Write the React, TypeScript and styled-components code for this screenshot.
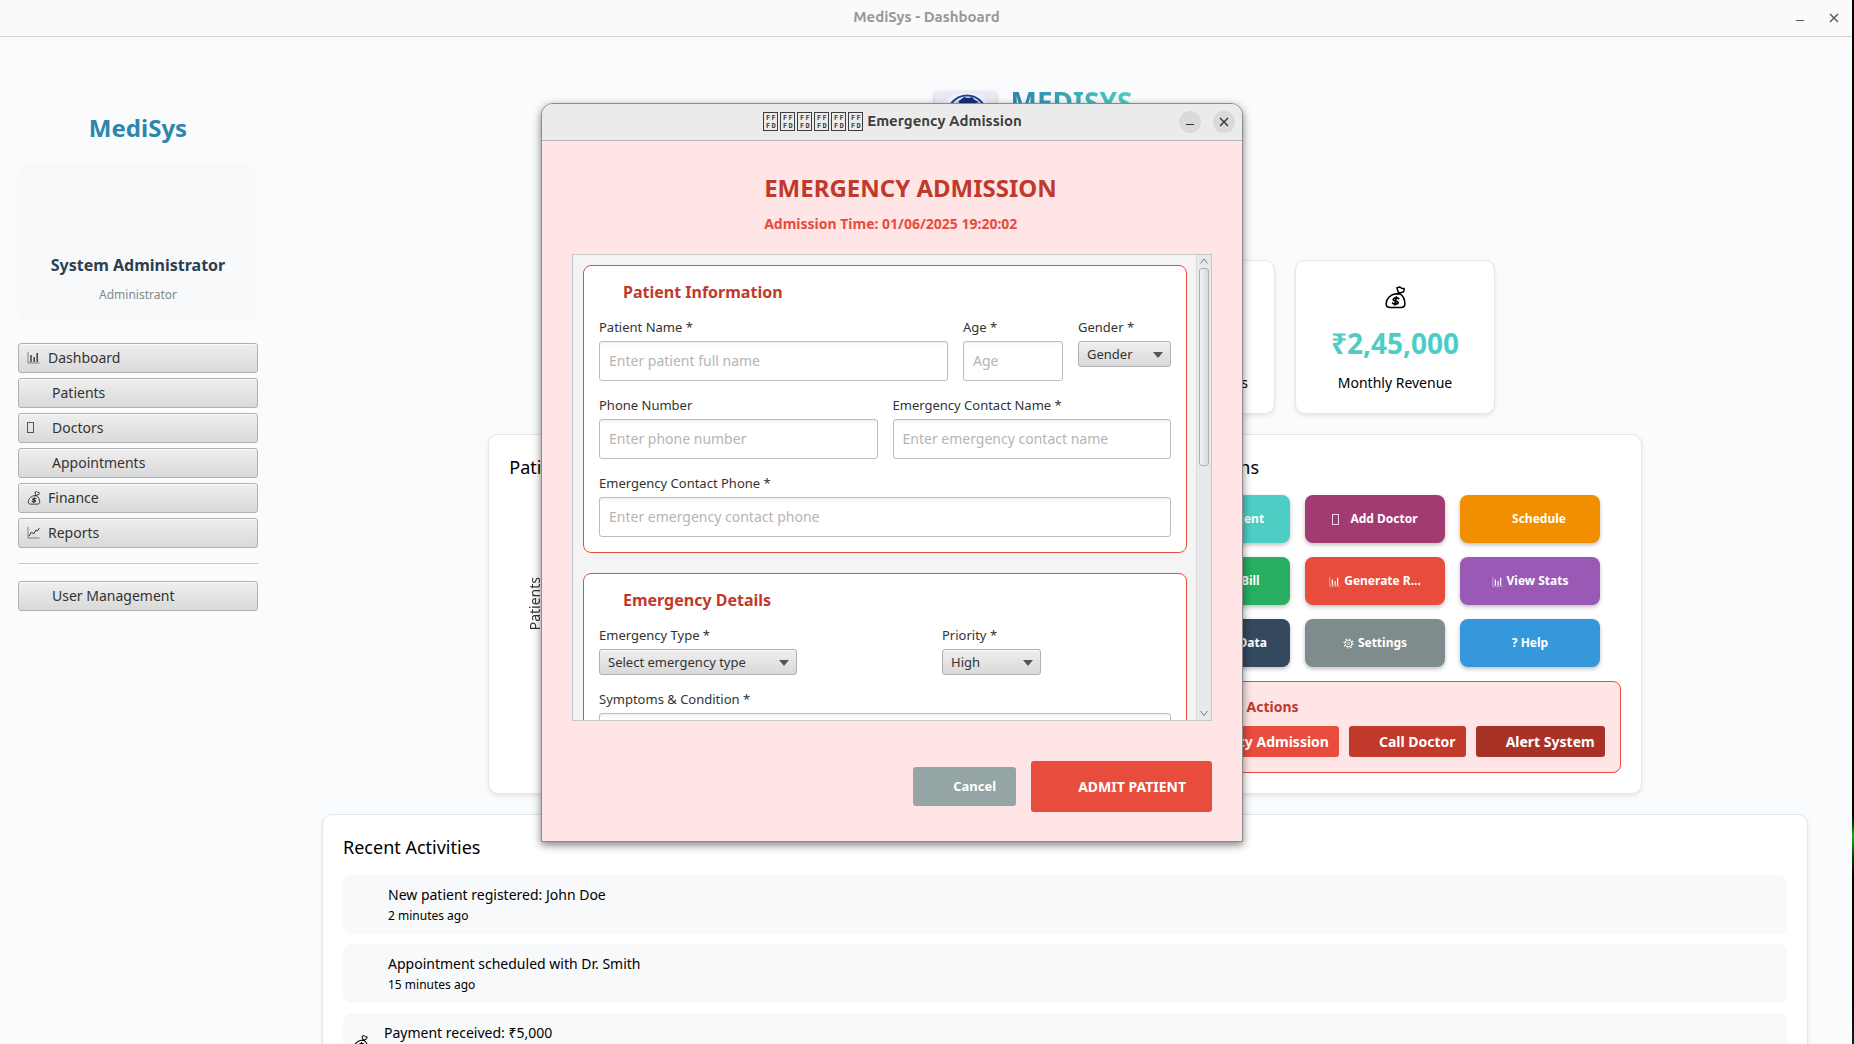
import React from "react";
import styled, { createGlobalStyle } from "styled-components";

const GlobalStyle = createGlobalStyle`
  * { box-sizing: border-box; }
  html, body { margin: 0; height: 100%; background: #000; overflow: hidden; }
  body, button, input, select, textarea { font-family: "Noto Sans", "Open Sans", sans-serif; }
  button, select { cursor: pointer; }
  h1, h2, h3, p { margin: 0; }
`;

/* ---------- desktop and windows ---------- */

const Desktop = styled.div`
  position: relative;
  height: 100vh;
  padding-right: 2px;
  overflow: hidden;
  background: linear-gradient(#000 0 78%, #0c3a0a 79%, #12b812 80%, #0c3a0a 82%, #000 84% 95%, #022 100%);
`;

const MainWindow = styled.div`
  height: 100%;
  display: flex;
  flex-direction: column;
  background: #fafbfd;
  overflow: hidden;
`;

const TitleBar = styled.header<{ $active?: boolean }>`
  flex: none;
  display: grid;
  grid-template-columns: 1fr auto 1fr;
  align-items: center;
  height: 37px;
  padding-right: 7px;
  background: ${(p) => (p.$active ? "#ebebeb" : "#fafafa")};
  border-bottom: 1px solid ${(p) => (p.$active ? "#b9b9b9" : "#d3d3d3")};
  color: ${(p) => (p.$active ? "#3d3d3d" : "#979797")};
`;

const WindowTitle = styled.div`
  grid-column: 2;
  display: flex;
  align-items: center;
  gap: 4px;
  padding: 0 0 2px 8px;
  font-family: Ubuntu, "Noto Sans", sans-serif;
  font-size: 15px;
  line-height: 20px;
  font-weight: 600;
`;

const MissingGlyphs = styled.span`
  display: flex;
  gap: 2px;
`;

const MissingGlyph = styled.span`
  display: grid;
  grid-template-columns: 1fr 1fr;
  place-items: center;
  width: 15px;
  height: 19px;
  padding: 1px;
  border: 1px solid #3d3d3d;
  font: 700 7px/8px "DejaVu Sans Mono", monospace;
`;

const WindowControls = styled.div`
  display: flex;
  justify-content: flex-end;
  gap: 12px;
`;

const WindowButton = styled.button<{ $filled?: boolean }>`
  width: 22px;
  height: 22px;
  padding: 0;
  border: 0;
  border-radius: 50%;
  background: ${(p) => (p.$filled ? "#dadada" : "transparent")};
  color: ${(p) => (p.$filled ? "#333" : "#555")};
  svg { display: block; }
`;

function Controls({ filled }: { filled?: boolean }) {
  return (
    <WindowControls>
      <WindowButton $filled={filled} aria-label="Minimize">
        <svg width="22" height="22" viewBox="0 0 22 22"><path d="M7 13.5h8" stroke="currentColor" /></svg>
      </WindowButton>
      <WindowButton $filled={filled} aria-label="Close">
        <svg width="22" height="22" viewBox="0 0 22 22"><path d="M7 7l8 8M15 7l-8 8" stroke="currentColor" strokeWidth="1.4" /></svg>
      </WindowButton>
    </WindowControls>
  );
}

/* ---------- icons ---------- */

const Blank = styled.span<{ $w: number }>`
  flex: none;
  display: inline-block;
  width: ${(p) => p.$w}px;
`;

const BarsIcon = ({ size = 13 }: { size?: number }) => (
  <svg width={size} height={size} viewBox="0 0 13 13" fill="none" stroke="currentColor">
    <path d="M1 1v11h11.5" strokeWidth=".8" opacity=".7" />
    <path d="M4 4v7M7.2 6v5M10.2 2v9" strokeWidth="1.4" />
  </svg>
);

const TrendIcon = () => (
  <svg width="13" height="13" viewBox="0 0 13 13" fill="none" stroke="currentColor">
    <path d="M1 1v11h11.5" strokeWidth=".8" opacity=".7" />
    <path d="M2 10l2.5-4 2 2L9 4l1.4 1L12.5 2" strokeWidth="1" />
  </svg>
);

const BagIcon = ({ size }: { size: number }) => (
  <svg width={size} height={size} viewBox="0 0 24 24" fill="none" stroke="currentColor" strokeLinecap="round" strokeLinejoin="round">
    <path d="M12.5 8C7 8.500 2.200 13.500 2.200 18.500c0 3 1.500 4 4.500 4h10.800c3 0 4.300-1.200 4.300-4 0-4.500-2.200-8.300-5.300-10.500z" strokeWidth="1.600" />
    <path d="M12.500 8l4.500.5M14.800 6.500L13.500 1.800l3.200-.8 1.600 1.400 2.800.3-.6 3.300-3.800 1.200z" strokeWidth="1.500" />
    <path d="M15.300 13.200c-1.200-1.100-5.300-1.100-5.600.9-.3 2 5.400 1.200 5 3.400-.4 1.900-4.500 1.600-5.700.4M12.900 11.500l-1.600 8.200" strokeWidth="1.900" />
  </svg>
);

const GearIcon = () => (
  <svg width="11" height="11" viewBox="0 0 11 11" fill="none" stroke="currentColor">
    <circle cx="5.500" cy="5.500" r="3.400" />
    <circle cx="5.500" cy="5.500" r="1" strokeWidth=".8" />
    <circle cx="5.500" cy="5.500" r="4.500" strokeWidth="1.200" strokeDasharray="1.500 2.034" />
  </svg>
);

const Tofu = styled.span<{ $after: number }>`
  width: 7px;
  height: 11px;
  margin-right: ${(p) => p.$after}px;
  border: 1px solid currentColor;
  opacity: 0.8;
`;

/* ---------- sidebar ---------- */

const Body = styled.div`
  flex: 1;
  min-height: 0;
  display: flex;
`;

const Sidebar = styled.aside`
  flex: none;
  width: 278px;
  padding: 74px 20px 0 18px;
`;

const Brand = styled.h1`
  font-size: 24px;
  line-height: 33px;
  text-align: center;
  color: #2e86ab;
`;

const UserCard = styled.section`
  margin: 20px 0 21px;
  padding: 90px 20px 18px;
  border-radius: 12px;
  background: #f8f9fa;
  text-align: center;
`;

const UserName = styled.p`
  font-size: 16px;
  line-height: 22px;
  font-weight: 700;
  color: #2c3e50;
  white-space: nowrap;
`;

const UserRole = styled.p`
  margin-top: 10px;
  font-size: 12px;
  line-height: 18px;
  color: #7f8c8d;
`;

const Menu = styled.nav`
  display: flex;
  flex-direction: column;
  gap: 5px;
`;

const raised = `
  border: 1px solid #b0b0b0;
  border-radius: 3px;
  background: linear-gradient(#efefef, #d9d9d9);
  box-shadow: inset 0 1px 0 #fafafa;
  color: #333;
`;

const MenuButton = styled.button`
  ${raised}
  display: flex;
  align-items: center;
  height: 30px;
  padding: 0 8px 1px;
  font-size: 14px;
  line-height: 19px;
  text-align: left;
`;

const IconSlot = styled.span<{ $w: number }>`
  flex: none;
  display: flex;
  align-items: center;
  width: ${(p) => p.$w}px;
`;

const Separator = styled.hr`
  width: 100%;
  height: 1px;
  margin: 10px 0 12px;
  border: 0;
  background: #c8c8c8;
`;

/* ---------- dashboard ---------- */

const Main = styled.main`
  flex: 1;
  min-width: 0;
  padding: 55px 44px 0;
  display: flex;
  flex-direction: column;
  align-items: center;
  color: #000;
  > * { flex-shrink: 0; }
`;

const Header = styled.div`
  display: flex;
  align-items: flex-start;
  gap: 15px;
  height: 168px;
`;

const Logo = styled.svg`
  filter: drop-shadow(0 1px 2px rgba(0, 0, 0, 0.25));
`;

const HeaderText = styled.div`
  width: 185px;
`;

const HeaderTitle = styled.h1`
  width: 120px;
  font-size: 28px;
  line-height: 20px;
  background: linear-gradient(90deg, #2e86ab, #4ecdc4);
  -webkit-background-clip: text;
  background-clip: text;
  color: transparent;
`;

const Stats = styled.div`
  display: flex;
  gap: 20px;
`;

const Card = styled.section`
  border: 1px solid #e1e8ed;
  border-radius: 10px;
  background: #fff;
  box-shadow: 0 2px 4px rgba(0, 0, 0, 0.09);
`;

const StatCard = styled(Card)`
  width: 200px;
  padding: 20px;
  display: flex;
  flex-direction: column;
  align-items: center;
  gap: 10px;
`;

const StatIcon = styled.div`
  display: grid;
  place-items: center;
  height: 33px;
`;

const StatValue = styled.div`
  font-size: 28px;
  line-height: 38px;
  font-weight: 700;
  color: #4ecdc4;
`;

const StatLabel = styled.div`
  padding-top: 1px;
  font-size: 14px;
  line-height: 20px;
  white-space: nowrap;
`;

const Panels = styled.div`
  display: flex;
  gap: 20px;
  margin: 20px 0;
`;

const Panel = styled(Card)`
  padding: 20px;
`;

const ChartPanel = styled(Panel)`
  width: 600px;
  display: flex;
  flex-direction: column;
`;

const PanelTitle = styled.h2`
  margin-bottom: 15px;
  font-size: 18px;
  line-height: 25px;
  font-weight: 400;
`;

const AxisLabel = styled.div`
  align-self: flex-start;
  margin: 82px 0 0 16px;
  writing-mode: vertical-rl;
  rotate: 180deg;
  font-size: 14px;
  line-height: 19px;
  color: #333;
`;

const ActionGrid = styled.div`
  display: grid;
  grid-template-columns: repeat(3, 140px);
  justify-content: center;
  gap: 14px 15px;
`;

const ActionButton = styled.button<{ $color: string }>`
  display: flex;
  align-items: center;
  justify-content: center;
  gap: 4px;
  height: 48px;
  padding: 0 10px;
  border: 0;
  border-radius: 8px;
  background: ${(p) => p.$color};
  box-shadow: 0 2px 4px rgba(0, 0, 0, 0.25);
  color: #fff;
  font-size: 12px;
  line-height: 16px;
  font-weight: 700;
  white-space: nowrap;
`;

const AlertBox = styled.div`
  margin-top: 14px;
  padding: 15px;
  border: 1px solid #e74c3c;
  border-radius: 8px;
  background: #ffe5e5;
`;

const AlertTitle = styled.h3`
  display: flex;
  margin-bottom: 10px;
  font-size: 14px;
  line-height: 19px;
  color: #c0392b;
`;

const AlertRow = styled.div`
  display: flex;
  gap: 10px;
`;

const SolidButton = styled.button<{ $color: string; $size?: number; $pad?: string }>`
  display: flex;
  align-items: center;
  padding: ${(p) => p.$pad ?? "6px 10px"};
  border: 0;
  border-radius: 3px;
  background: ${(p) => p.$color};
  color: #fff;
  font-size: ${(p) => p.$size ?? 14}px;
  line-height: 19px;
  font-weight: 700;
  white-space: nowrap;
`;

const Recent = styled(Panel)`
  align-self: stretch;
`;

const ActivityList = styled.div`
  display: flex;
  flex-direction: column;
  gap: 10px;
`;

const Activity = styled.div`
  display: flex;
  align-items: center;
  gap: 15px;
  padding: 10px;
  border-radius: 8px;
  background: #f8f9fa;
`;

const ActivityText = styled.p`
  font-size: 14px;
  line-height: 19px;
`;

const ActivityTime = styled.p`
  margin-top: 3px;
  font-size: 12px;
  line-height: 17px;
`;

/* ---------- admission dialog ---------- */

const Dialog = styled.div`
  position: absolute;
  left: 541px;
  top: 103px;
  width: 702px;
  border: 1px solid #8b8b8b;
  border-radius: 12px 12px 0 0;
  box-shadow: 0 3px 9px rgba(0, 0, 0, 0.5);
  background: #ffe5e5;
  overflow: hidden;
`;

const DialogBody = styled.form`
  padding: 30px 30px 29px;
`;

const DialogHead = styled.div`
  display: flex;
  justify-content: center;
  gap: 15px;
  margin-bottom: 21px;
`;

const DialogTitle = styled.h2`
  font-size: 24px;
  line-height: 33px;
  color: #c0392b;
`;

const AdmissionTime = styled.p`
  margin-top: 10px;
  font-size: 14px;
  line-height: 19px;
  font-weight: 700;
  color: #e74c3c;
`;

const ScrollPane = styled.div`
  display: flex;
  height: 467px;
  border: 1px solid #c8c8c8;
  background: #f4f4f4;
`;

const ScrollContent = styled.div`
  flex: 1;
  min-width: 0;
  padding: 10px 9px 10px 10px;
  overflow: hidden;
`;

const ScrollTrack = styled.div`
  flex: none;
  display: flex;
  flex-direction: column;
  align-items: center;
  width: 15px;
  border-left: 1px solid #dcdcdc;
  background: #e9e9e9;
  color: #777;
`;

const Thumb = styled.div`
  width: 10px;
  height: 198px;
  margin-bottom: auto;
  border: 1px solid #b0b0b0;
  border-radius: 3px;
  background: linear-gradient(90deg, #f2f2f2, #dadada);
`;

const FormCard = styled.fieldset`
  display: flex;
  flex-direction: column;
  gap: 15px;
  min-width: 0;
  margin: 0 0 20px;
  padding: 15px;
  border: 1px solid #e74c3c;
  border-radius: 8px;
  background: #fff;
`;

const FormTitle = styled.h3`
  display: flex;
  font-size: 16px;
  line-height: 22px;
  color: #c0392b;
`;

const FieldRow = styled.div`
  display: flex;
  gap: 15px;
`;

const Field = styled.div<{ $flex?: string }>`
  flex: ${(p) => p.$flex ?? "1 1 0"};
  min-width: 0;
  display: flex;
  flex-direction: column;
  align-items: flex-start;
  gap: 5px;
`;

const Label = styled.label`
  font-size: 13px;
  line-height: 18px;
  color: #333;
  white-space: nowrap;
`;

const textBox = `
  width: 100%;
  border: 1px solid #bdbdbd;
  border-radius: 3px;
  background: linear-gradient(#f2f2f2, #fff 4px);
  font-size: 14px;
  outline: 0;
  &::placeholder { color: #b5b5b5; opacity: 1; }
`;

const TextInput = styled.input`
  ${textBox}
  height: 40px;
  padding: 0 9px 1px;
`;

const TextArea = styled.textarea`
  ${textBox}
  display: block;
  height: 80px;
  padding: 9px;
  resize: none;
`;

const SelectWrap = styled.div<{ $w: number }>`
  position: relative;
  width: ${(p) => p.$w}px;
  &::after {
    content: "";
    position: absolute;
    right: 8px;
    top: 11px;
    border: 5px solid transparent;
    border-top: 6px solid #555;
    border-bottom: 0;
    pointer-events: none;
  }
`;

const Select = styled.select`
  ${raised}
  appearance: none;
  display: block;
  width: 100%;
  height: 26px;
  padding: 0 20px 0 8px;
  font-size: 13px;
  line-height: 18px;
`;

const DialogActions = styled.div`
  display: flex;
  justify-content: flex-end;
  align-items: center;
  gap: 15px;
  margin-top: 40px;
`;

const menuItems: { label: string; icon: React.ReactNode; slot: number }[] = [
  { label: "Dashboard", icon: <BarsIcon />, slot: 21 },
  { label: "Patients", icon: null, slot: 25 },
  { label: "Doctors", icon: <Tofu $after={0} />, slot: 25 },
  { label: "Appointments", icon: null, slot: 25 },
  { label: "Finance", icon: <BagIcon size={14} />, slot: 21 },
  { label: "Reports", icon: <TrendIcon />, slot: 21 },
];

const actions: { label: string; color: string; icon: React.ReactNode }[] = [
  { label: "Add Patient", color: "#4ecdc4", icon: <Blank $w={14} /> },
  { label: "Add Doctor", color: "#a23b72", icon: <Tofu $after={7} /> },
  { label: "Schedule", color: "#f18f01", icon: <Blank $w={14} /> },
  { label: "Create Bill", color: "#27ae60", icon: <Blank $w={14} /> },
  { label: "Generate R...", color: "#e74c3c", icon: <BarsIcon size={11} /> },
  { label: "View Stats", color: "#9b59b6", icon: <BarsIcon size={11} /> },
  { label: "Backup Data", color: "#34495e", icon: <Blank $w={14} /> },
  { label: "Settings", color: "#7f8c8d", icon: <GearIcon /> },
  { label: "? Help", color: "#3498db", icon: null },
];

const activities = [
  { text: "New patient registered: John Doe", time: "2 minutes ago", icon: <Blank $w={20} /> },
  { text: "Appointment scheduled with Dr. Smith", time: "15 minutes ago", icon: <Blank $w={20} /> },
  { text: "Payment received: ₹5,000", time: "1 hour ago", icon: <BagIcon size={16} /> },
];

function SelectField({ id, label, value, width, flex }: { id: string; label: string; value: string; width: number; flex: string }) {
  return (
    <Field $flex={flex}>
      <Label htmlFor={id}>{label}</Label>
      <SelectWrap $w={width}>
        <Select id={id} defaultValue={value}><option>{value}</option></Select>
      </SelectWrap>
    </Field>
  );
}

function InputField({ id, label, hint, flex }: { id: string; label: string; hint: string; flex?: string }) {
  return (
    <Field $flex={flex}>
      <Label htmlFor={id}>{label}</Label>
      <TextInput id={id} placeholder={hint} />
    </Field>
  );
}

function AdmissionDialog() {
  return (
    <Dialog role="dialog" aria-label="Emergency Admission">
      <TitleBar $active>
        <WindowTitle>
          <MissingGlyphs>
            {[0, 1, 2, 3, 4, 5].map((i) => (
              <MissingGlyph key={i}><span>F</span><span>F</span><span>F</span><span>D</span></MissingGlyph>
            ))}
          </MissingGlyphs>
          Emergency Admission
        </WindowTitle>
        <Controls filled />
      </TitleBar>
      <DialogBody onSubmit={(e) => e.preventDefault()}>
        <DialogHead>
          <Blank $w={22} />
          <div>
            <DialogTitle>EMERGENCY ADMISSION</DialogTitle>
            <AdmissionTime>Admission Time: 01/06/2025 19:20:02</AdmissionTime>
          </div>
        </DialogHead>
        <ScrollPane>
          <ScrollContent>
            <FormCard>
              <FormTitle><Blank $w={24} />Patient Information</FormTitle>
              <FieldRow>
                <InputField id="name" label="Patient Name *" hint="Enter patient full name" />
                <InputField id="age" label="Age *" hint="Age" flex="0 0 100px" />
                <SelectField id="gender" label="Gender *" value="Gender" width={93} flex="none" />
              </FieldRow>
              <FieldRow>
                <InputField id="phone" label="Phone Number" hint="Enter phone number" />
                <InputField id="contact" label="Emergency Contact Name *" hint="Enter emergency contact name" />
              </FieldRow>
              <InputField id="contact-phone" label="Emergency Contact Phone *" hint="Enter emergency contact phone" flex="none" />
            </FormCard>
            <FormCard>
              <FormTitle><Blank $w={24} />Emergency Details</FormTitle>
              <FieldRow>
                <SelectField id="type" label="Emergency Type *" value="Select emergency type" width={198} flex="1 1 auto" />
                <SelectField id="priority" label="Priority *" value="High" width={99} flex="1 1 auto" />
              </FieldRow>
              <Field $flex="none">
                <Label htmlFor="symptoms">Symptoms &amp; Condition *</Label>
                <TextArea id="symptoms" />
              </Field>
            </FormCard>
          </ScrollContent>
          <ScrollTrack>
            <svg width="10" height="13" viewBox="0 0 10 13" fill="none" stroke="currentColor"><path d="M1.500 8.500L5 4l3.500 4.500" /></svg>
            <Thumb />
            <svg width="10" height="13" viewBox="0 0 10 13" fill="none" stroke="currentColor"><path d="M1.500 4L5 8.500 8.500 4" /></svg>
          </ScrollTrack>
        </ScrollPane>
        <DialogActions>
          <SolidButton type="button" $color="#95a5a6" $size={13} $pad="10px 20px"><Blank $w={20} />Cancel</SolidButton>
          <SolidButton type="submit" $color="#e74c3c" $pad="16px 26px"><Blank $w={21} />ADMIT PATIENT</SolidButton>
        </DialogActions>
      </DialogBody>
    </Dialog>
  );
}

export default function App() {
  return (
    <Desktop>
      <GlobalStyle />
      <MainWindow>
        <TitleBar>
          <WindowTitle>MediSys - Dashboard</WindowTitle>
          <Controls />
        </TitleBar>
        <Body>
          <Sidebar>
            <Brand>MediSys</Brand>
            <UserCard>
              <UserName>System Administrator</UserName>
              <UserRole>Administrator</UserRole>
            </UserCard>
            <Menu>
              {menuItems.map((m) => (
                <MenuButton key={m.label}><IconSlot $w={m.slot}>{m.icon}</IconSlot>{m.label}</MenuButton>
              ))}
              <Separator />
              <MenuButton><IconSlot $w={25} />User Management</MenuButton>
            </Menu>
          </Sidebar>
          <Main>
            <Header>
              <Logo width="61" height="60" viewBox="0 0 61 60">
                <rect width="61" height="60" fill="#ece9f7" />
                <ellipse cx="31" cy="26" rx="28" ry="25" fill="#f6f4fc" />
                <circle cx="32" cy="23" r="19.500" fill="none" stroke="#1f4099" strokeWidth="2.200" />
                <circle cx="32" cy="23" r="16.500" fill="none" stroke="#8fa3d0" />
                <path d="M24 9l5-4 4 1 4-1 3 3 4 2-3 1 4 4-6-2-3 3-2 18h-3l1-17-6 1 2-4-5-1z" fill="#15306f" />
              </Logo>
              <HeaderText><HeaderTitle>MEDISYS</HeaderTitle></HeaderText>
            </Header>
            <Stats>
              <StatCard /><StatCard />
              <StatCard>
                <StatIcon /><StatValue>23</StatValue><StatLabel>Today's Appointments</StatLabel>
              </StatCard>
              <StatCard>
                <StatIcon><BagIcon size={23} /></StatIcon><StatValue>₹2,45,000</StatValue><StatLabel>Monthly Revenue</StatLabel>
              </StatCard>
            </Stats>
            <Panels>
              <ChartPanel>
                <PanelTitle>Patient Statistics</PanelTitle>
                <AxisLabel>Patients</AxisLabel>
              </ChartPanel>
              <Panel>
                <PanelTitle><Blank $w={15} />Quick Actions</PanelTitle>
                <ActionGrid>
                  {actions.map((a) => (
                    <ActionButton key={a.label} $color={a.color}>{a.icon}{a.label}</ActionButton>
                  ))}
                </ActionGrid>
                <AlertBox>
                  <AlertTitle><Blank $w={20} />Emergency Actions</AlertTitle>
                  <AlertRow>
                    <SolidButton $color="#e74c3c"><Blank $w={20} />Emergency Admission</SolidButton>
                    <SolidButton $color="#c0392b"><Blank $w={20} />Call Doctor</SolidButton>
                    <SolidButton $color="#a93226"><Blank $w={20} />Alert System</SolidButton>
                  </AlertRow>
                </AlertBox>
              </Panel>
            </Panels>
            <Recent>
              <PanelTitle>Recent Activities</PanelTitle>
              <ActivityList>
                {activities.map((a) => (
                  <Activity key={a.text}>
                    {a.icon}
                    <div>
                      <ActivityText>{a.text}</ActivityText>
                      <ActivityTime>{a.time}</ActivityTime>
                    </div>
                  </Activity>
                ))}
              </ActivityList>
            </Recent>
          </Main>
        </Body>
      </MainWindow>
      <AdmissionDialog />
    </Desktop>
  );
}
